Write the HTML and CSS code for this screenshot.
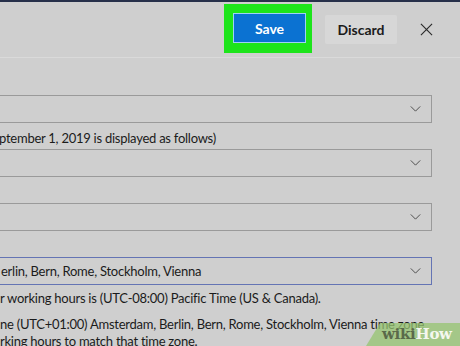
FILE: index.html
```html
<!DOCTYPE html>
<html lang="en">
<head>
    <meta charset="UTF-8">
    <meta name="viewport" content="width=device-width, initial-scale=1.0">
    <title>Calendar settings</title>
    <link rel="stylesheet" href="styles.css">
</head>
<body>
    <div class="top-line"></div>

    <div class="dialog-header">
        <div class="save-highlight">
            <button class="save-button">Save</button>
        </div>
        <button class="discard-button">Discard</button>
        <button class="close-button" aria-label="Close">
            <svg viewBox="0 0 14 14">
                <path d="M1 1 L13 13 M13 1 L1 13"/>
            </svg>
        </button>
    </div>

    <div class="settings-form">
        <div class="field">
            <div class="field-label"></div>
            <div class="select-box">
                <span class="select-value"></span>
                <svg class="chevron" viewBox="0 0 12 7"><path d="M0.5 0.5 L6 6 L11.5 0.5"/></svg>
            </div>
        </div>

        <div class="field">
            <div class="field-label">ptember 1, 2019 is displayed as follows)</div>
            <div class="select-box">
                <span class="select-value"></span>
                <svg class="chevron" viewBox="0 0 12 7"><path d="M0.5 0.5 L6 6 L11.5 0.5"/></svg>
            </div>
        </div>

        <div class="field">
            <div class="field-label"></div>
            <div class="select-box">
                <span class="select-value"></span>
                <svg class="chevron" viewBox="0 0 12 7"><path d="M0.5 0.5 L6 6 L11.5 0.5"/></svg>
            </div>
        </div>

        <div class="field">
            <div class="field-label"></div>
            <div class="select-box select-focused">
                <span class="select-value">erlin, Bern, Rome, Stockholm, Vienna</span>
                <svg class="chevron" viewBox="0 0 12 7"><path d="M0.5 0.5 L6 6 L11.5 0.5"/></svg>
            </div>
        </div>

        <p class="hint">r working hours is (UTC-08:00) Pacific Time (US &amp; Canada).</p>
        <p class="hint hint-wrap">ne (UTC+01:00) Amsterdam, Berlin, Bern, Rome, Stockholm, Vienna time zone<br>rking hours to match that time zone.</p>
    </div>

    <div class="watermark"><span class="wm-wiki">wiki</span><span class="wm-how">How</span></div>
</body>
</html>
```

FILE: styles.css
```css
* {
    margin: 0;
    padding: 0;
    box-sizing: border-box;
}

body {
    font-family: Lato, 'Noto Sans', sans-serif;
    background: #cfcfcf;
    color: #1b1b1b;
    width: 460px;
    height: 346px;
    overflow: hidden;
    position: relative;
}

.top-line {
    height: 2px;
    background: #27304a;
}

.dialog-header {
    height: 56px;
    display: flex;
    align-items: center;
    justify-content: flex-end;
    padding-right: 26px;
    border-bottom: 1px solid #dadada;
}

.save-highlight {
    background: #1de41b;
    padding: 9px 6px 10px 9px;
    margin-top: -2px;
}

.save-button {
    display: block;
    width: 73px;
    height: 30px;
    background: #0b72d2;
    border: 1px solid #9fd0f5;
    color: #fff;
    font-family: inherit;
    font-size: 14px;
    font-weight: 700;
}

.discard-button {
    width: 72px;
    height: 29px;
    margin-left: 13px;
    background: #d7d7d7;
    border: none;
    border-radius: 2px;
    color: #1b1b1b;
    font-family: inherit;
    font-size: 14px;
    font-weight: 700;
}

.close-button {
    width: 14px;
    height: 14px;
    margin-left: 23px;
    background: none;
    border: none;
}

.close-button svg {
    display: block;
    width: 13px;
    height: 13px;
    stroke: #2a2a2a;
    stroke-width: 1.2;
    fill: none;
}

.settings-form {
    padding-top: 11px;
    margin-left: -10px;
    width: 442px;
    font-size: 13px;
    letter-spacing: -0.25px;
}

.field-label {
    height: 26px;
    line-height: 30px;
    padding-left: 9px;
    white-space: nowrap;
}

.select-box {
    height: 28px;
    border: 1.5px solid #9a9a9a;
    display: flex;
    align-items: center;
    justify-content: space-between;
    padding: 0 10px 0 10px;
}

.select-focused {
    border-color: #6474b4;
}

.select-value {
    white-space: nowrap;
}

.chevron {
    width: 11px;
    height: 6px;
    stroke: #3a3a3a;
    stroke-width: 1;
    fill: none;
}

.hint {
    padding-left: 10px;
    white-space: nowrap;
    line-height: 17px;
    margin-top: 5px;
}

.hint-wrap {
    margin-top: 9px;
}

.watermark {
    position: absolute;
    right: 0;
    bottom: 0;
    width: 94px;
    height: 23px;
    background: rgba(150, 196, 112, 0.75);
    clip-path: polygon(14px 0, 100% 0, 100% 100%, 0 100%);
    font-family: 'DejaVu Serif', serif;
    font-weight: 700;
    font-size: 15px;
    line-height: 23px;
    padding-left: 16px;
    letter-spacing: -0.3px;
}

.wm-wiki {
    color: #5a6a4a;
}

.wm-how {
    color: #f4f7ef;
}
```
